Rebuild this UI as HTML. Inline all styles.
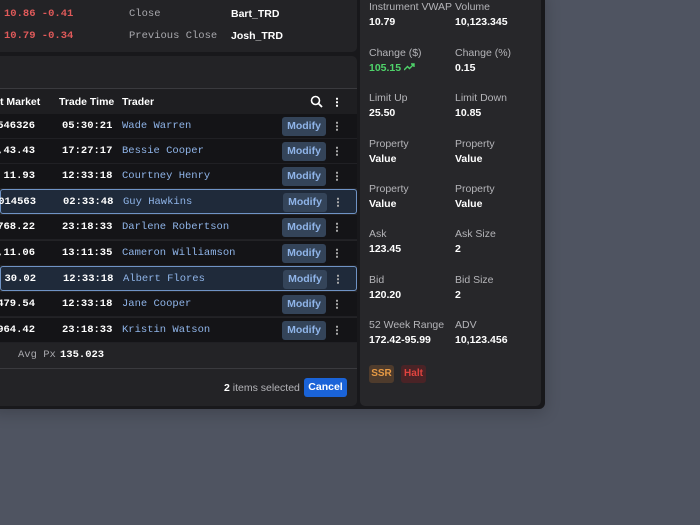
<!DOCTYPE html>
<html><head><style>
*{margin:0;padding:0;box-sizing:border-box}
body{width:700px;height:525px;overflow:hidden;background:#4f5461;font-family:"Liberation Sans",sans-serif;position:relative}
.frame{position:absolute;left:-10px;top:-10px;width:555px;height:419px;background:#18181b;border-radius:6px;box-shadow:0 4px 16px rgba(0,0,0,.2)}
.card{position:absolute;background:#232326;border-radius:5px}
.mono{font-family:"Liberation Mono",monospace}
.red{color:#e05a5a}
.lbl{color:#a8a8ad}
.w{color:#fff;font-weight:bold}
.row{position:absolute;left:0;width:357px;height:25px;background:#141417;border-bottom:1px solid #202024}
.row.sel{background:#1f2a3a;border:1.5px solid #6f93c5;border-radius:3px;width:357px}
.row span{position:absolute;top:6px;font-size:10.5px}
.c1{right:322px;color:#fff;font-family:"Liberation Mono",monospace;font-weight:bold}
.c2{left:62px;color:#fff;font-family:"Liberation Mono",monospace;font-weight:bold}
.c3{left:122px;color:#8fb4e8;font-family:"Liberation Mono",monospace}
.mod{position:absolute;left:282px;top:3px;width:44px;height:19px;background:#344459;border-radius:3px;color:#8fb4e8;font-size:10.5px;font-weight:bold;text-align:center;line-height:19px}
.dots{position:absolute;left:336px;top:7px;width:2px;height:10px;background:radial-gradient(circle,#aaa 1px,transparent 1.2px) 0 0/2px 3.5px}
.p{position:absolute;font-size:10.5px}
.p .l{color:#b4b4b8}
.p .v{color:#fff;font-weight:bold;margin-top:3px}
</style></head><body>
<div class="frame"></div>
<div class="card" style="left:-6px;top:-6px;width:363px;height:58px">
</div>
<div class="mono red" style="position:absolute;left:4px;top:8px;font-size:10.5px;font-weight:bold">10.86 -0.41</div>
<div class="mono red" style="position:absolute;left:4px;top:30px;font-size:10.5px;font-weight:bold">10.79 -0.34</div>
<div class="mono lbl" style="position:absolute;left:129px;top:8px;font-size:10.5px">Close</div>
<div class="mono lbl" style="position:absolute;left:129px;top:30px;font-size:10.5px">Previous Close</div>
<div class="w" style="position:absolute;left:231px;top:8px;font-size:10.5px">Bart_TRD</div>
<div class="w" style="position:absolute;left:231px;top:30px;font-size:10.5px">Josh_TRD</div>

<div class="card" style="left:-6px;top:56px;width:363px;height:350px"></div>
<div style="position:absolute;left:0;top:88px;width:357px;height:1px;background:#3a3a3e"></div>
<div style="position:absolute;left:0;top:89px;width:357px;height:25px;background:#1e1e21"></div>
<div class="w" style="position:absolute;left:0;top:96px;font-size:10.5px">t Market</div>
<div class="w" style="position:absolute;left:59px;top:96px;font-size:10.5px">Trade Time</div>
<div class="w" style="position:absolute;left:122px;top:96px;font-size:10.5px">Trader</div>
<svg style="position:absolute;left:310px;top:95px" width="13" height="13" viewBox="0 0 13 13"><circle cx="5.5" cy="5.5" r="4" fill="none" stroke="#fff" stroke-width="1.6"/><line x1="8.5" y1="8.5" x2="12" y2="12" stroke="#fff" stroke-width="1.8"/></svg>
<div class="dots" style="left:336px;top:97px;background:radial-gradient(circle,#fff 1px,transparent 1.2px) 0 0/2px 3.5px"></div>

<div class="row" style="top:114px"><span class="c1">546326</span><span class="c2">05:30:21</span><span class="c3">Wade Warren</span><div class="mod">Modify</div><div class="dots"></div></div>
<div class="row" style="top:139px"><span class="c1">,43.43</span><span class="c2">17:27:17</span><span class="c3">Bessie Cooper</span><div class="mod">Modify</div><div class="dots"></div></div>
<div class="row" style="top:164px"><span class="c1">11.93</span><span class="c2">12:33:18</span><span class="c3">Courtney Henry</span><div class="mod">Modify</div><div class="dots"></div></div>
<div class="row sel" style="top:189px"><span class="c1" style="right:320px">014563</span><span class="c2">02:33:48</span><span class="c3">Guy Hawkins</span><div class="mod">Modify</div><div class="dots"></div></div>
<div class="row" style="top:215px"><span class="c1">768.22</span><span class="c2">23:18:33</span><span class="c3">Darlene Robertson</span><div class="mod">Modify</div><div class="dots"></div></div>
<div class="row" style="top:241px"><span class="c1">,11.06</span><span class="c2">13:11:35</span><span class="c3">Cameron Williamson</span><div class="mod">Modify</div><div class="dots"></div></div>
<div class="row sel" style="top:266px"><span class="c1" style="right:320px">30.02</span><span class="c2">12:33:18</span><span class="c3">Albert Flores</span><div class="mod">Modify</div><div class="dots"></div></div>
<div class="row" style="top:292px"><span class="c1">479.54</span><span class="c2">12:33:18</span><span class="c3">Jane Cooper</span><div class="mod">Modify</div><div class="dots"></div></div>
<div class="row" style="top:318px"><span class="c1">964.42</span><span class="c2">23:18:33</span><span class="c3">Kristin Watson</span><div class="mod">Modify</div><div class="dots"></div></div>

<div class="mono lbl" style="position:absolute;left:18px;top:349px;font-size:10.5px">Avg Px</div>
<div class="mono w" style="position:absolute;left:60px;top:349px;font-size:10.5px">135.023</div>
<div style="position:absolute;left:0;top:368px;width:357px;height:1px;background:#3a3a3e"></div>
<div style="position:absolute;left:224px;top:382px;font-size:10.5px;color:#b4b4b8"><b style="color:#fff">2</b> items selected</div>
<div style="position:absolute;left:304px;top:378px;width:43px;height:19px;background:#1a63d8;border-radius:3px;color:#fff;font-size:10.5px;font-weight:bold;text-align:center;line-height:19px">Cancel</div>

<div class="card" style="left:360px;top:-6px;width:181px;height:412px;background:#27272a"></div>
<div class="p" style="left:369px;top:1px"><div class="l">Instrument VWAP</div><div class="v">10.79</div></div>
<div class="p" style="left:455px;top:1px"><div class="l">Volume</div><div class="v">10,123.345</div></div>
<div class="p" style="left:369px;top:47px"><div class="l">Change ($)</div><div class="v" style="color:#4fd36a">105.15 <svg width="11" height="8" viewBox="0 0 11 8"><path d="M0 7 L3.5 3.5 L5.5 5.5 L10 1 M7 1 H10 V4" fill="none" stroke="#4fd36a" stroke-width="1.4"/></svg></div></div>
<div class="p" style="left:455px;top:47px"><div class="l">Change (%)</div><div class="v">0.15</div></div>
<div class="p" style="left:369px;top:92px"><div class="l">Limit Up</div><div class="v">25.50</div></div>
<div class="p" style="left:455px;top:92px"><div class="l">Limit Down</div><div class="v">10.85</div></div>
<div class="p" style="left:369px;top:138px"><div class="l">Property</div><div class="v">Value</div></div>
<div class="p" style="left:455px;top:138px"><div class="l">Property</div><div class="v">Value</div></div>
<div class="p" style="left:369px;top:183px"><div class="l">Property</div><div class="v">Value</div></div>
<div class="p" style="left:455px;top:183px"><div class="l">Property</div><div class="v">Value</div></div>
<div class="p" style="left:369px;top:228px"><div class="l">Ask</div><div class="v">123.45</div></div>
<div class="p" style="left:455px;top:228px"><div class="l">Ask Size</div><div class="v">2</div></div>
<div class="p" style="left:369px;top:274px"><div class="l">Bid</div><div class="v">120.20</div></div>
<div class="p" style="left:455px;top:274px"><div class="l">Bid Size</div><div class="v">2</div></div>
<div class="p" style="left:369px;top:319px"><div class="l">52 Week Range</div><div class="v">172.42-95.99</div></div>
<div class="p" style="left:455px;top:319px"><div class="l">ADV</div><div class="v">10,123.456</div></div>
<div style="position:absolute;left:369px;top:365px;width:25px;height:18px;background:#4e3b2c;border-radius:3px;color:#e79a45;font-size:10px;font-weight:bold;text-align:center;line-height:18px">SSR</div>
<div style="position:absolute;left:401px;top:365px;width:25px;height:18px;background:#4a2326;border-radius:3px;color:#e0443f;font-size:10px;font-weight:bold;text-align:center;line-height:18px">Halt</div>
</body></html>
